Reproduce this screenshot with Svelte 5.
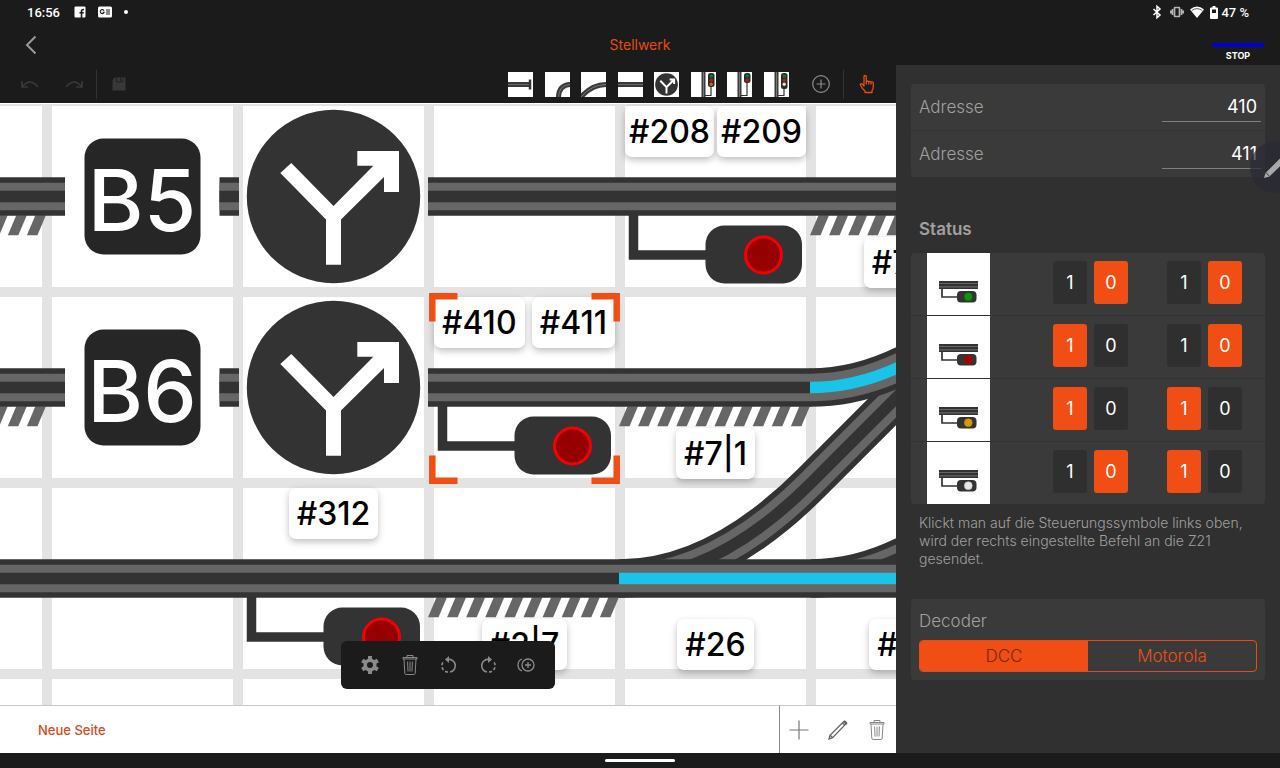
<script lang="ts">
	interface TileLabel {
		col: number;
		row: number;
		text: string;
		side?: 'start' | 'center' | 'end';
		bottom?: boolean;
		tight?: boolean;
	}

	const TILE = 191;
	const OFFSET_X = 47;
	const OFFSET_Y = -2;

	const tileX = (col: number) => OFFSET_X + col * TILE;
	const tileY = (row: number) => OFFSET_Y + row * TILE;

	const gridLines = [-1, 0, 1, 2, 3, 4, 5, 6, 7, 8, 9, 10];
	const stripes = [0, 1, 2, 3, 4, 5, 6, 7, 8, 9];

	const platforms = [
		{ col: -1, row: 0 },
		{ col: -1, row: 1 },
		{ col: 4, row: 0 },
		{ col: 3, row: 1 },
		{ col: 2, row: 2 }
	];
	const signals = [
		{ col: 3, row: 0 },
		{ col: 2, row: 1 },
		{ col: 1, row: 2 }
	];
	const blocks = [
		{ row: 0, name: 'B5' },
		{ row: 1, name: 'B6' }
	];

	const labels: TileLabel[] = [
		{ col: 3, row: 0, text: '#208', side: 'start', tight: true },
		{ col: 3, row: 0, text: '#209', side: 'end', tight: true },
		{ col: 4, row: 0, text: '#7|2', bottom: true },
		{ col: 2, row: 1, text: '#410', side: 'start' },
		{ col: 2, row: 1, text: '#411', side: 'end' },
		{ col: 3, row: 1, text: '#7|1', bottom: true },
		{ col: 1, row: 2, text: '#312' },
		{ col: 2, row: 2, text: '#2|7', bottom: true },
		{ col: 3, row: 2, text: '#26', bottom: true },
		{ col: 4, row: 2, text: '#27', bottom: true }
	];

	const tools = ['end', 'curve', 'bend', 'straight', 'route', 'signal3', 'signal2', 'signal4'];

	let addresses = $state([410, 411]);
	let states = $state([
		{ name: 'Grün', light: '#0a970a', ring: '#0b7a10', bits: [0, 0] },
		{ name: 'Rot', light: '#a00000', ring: '#c00000', bits: [1, 0] },
		{ name: 'Gelb', light: '#e09600', ring: '#c98a10', bits: [1, 1] },
		{ name: 'Weiß', light: '#e8e8e8', ring: '#cccccc', bits: [0, 1] }
	]);
	let decoder = $state('DCC');
</script>

{#snippet track(d: string, occupied = false)}
	<path class="rail-outer" {d} />
	<path class="rail-bed" {d} />
	<path class={occupied ? 'rail-core occupied' : 'rail-core'} {d} />
{/snippet}

{#snippet routeSign()}
	<g>
		<circle cx="95.5" cy="95.5" r="86.7" fill="#333" />
		<path
			fill="#fff"
			d="M95.5 105L135.3 64.7H119.3V50H161V91H146V76L103 118.5V163.7H88V118.5L42.3 72L53.3 62Z"
		/>
	</g>
{/snippet}

{#snippet trash()}
	<svg width="20" height="22" viewBox="0 0 20 22" fill="none" stroke="currentColor" stroke-width="1">
		<path d="M4 5l.8 14c0 1 .5 1.500 1.400 1.500h7.600c.9 0 1.400-.5 1.400-1.500L16 5" />
		<path d="M3 5V3.500h14V5zM7 3.500V1.500h6v2M7.600 7.500l.4 10M10 7.500v10M12.400 7.500l-.4 10" />
	</svg>
{/snippet}

<div class="app">
	<div class="status-bar">
		<div class="status-group left">
			<span>16:56</span>
			<svg width="12" height="12" viewBox="0 0 12 12">
				<rect x="0.5" y="0.5" width="11" height="11" rx="1" fill="#fff" />
				<path d="M7.500 12V5.300q0-2 2.500-1.700M5.500 6.800h4.300" fill="none" stroke="#1b1b1b" stroke-width="1.6" />
			</svg>
			<svg width="14" height="12" viewBox="0 0 14 12">
				<rect y="0.5" width="14" height="11" rx="1.5" fill="#fff" />
				<path
					d="M6 4.600A2 2 0 1 0 6.200 6.200H4.600M8 4h4M8 6h4M8 8h4"
					fill="none"
					stroke="#1b1b1b"
					stroke-width="1.1"
				/>
			</svg>
			<span class="dot"></span>
		</div>
		<div class="status-group">
			<svg width="10" height="14" viewBox="0 0 10 14" fill="none" stroke="#fff" stroke-width="1.5">
				<path d="M1.500 4l6.500 6-3 2.700V1.300l3 2.700-6.500 6" />
			</svg>
			<svg class="vibrate" width="14" height="12" viewBox="0 0 14 12" fill="none" stroke="#b4b4b4" stroke-width="1.7">
				<rect x="4.5" y="1.5" width="5" height="9" rx="0.5" />
				<path d="M2.500 3v6M11.500 3v6M0.800 4.500v3M13.200 4.500v3" />
			</svg>
			<svg width="14" height="12" viewBox="0 0 14 12" fill="#fff">
				<path d="M0 3.500Q7-2.500 14 3.500L7 12Z" />
				<path d="M1.800 4.500Q7 .8 12.200 4.500" fill="none" stroke="#1b1b1b" stroke-width="0.7" />
			</svg>
			<svg width="8" height="13" viewBox="0 0 8 13">
				<path
					fill="#fff"
					fill-rule="evenodd"
					d="M2.500 0h3v1.500H7q1 0 1 1V12q0 1-1 1H1q-1 0-1-1V2.500q0-1 1-1h1.500zM2 3.500v3.500h4V3.500z"
				/>
			</svg>
			<span class="percent">47 %</span>
		</div>
	</div>

	<header>
		<div class="header-side">
			<button class="back" aria-label="Zurück">
				<svg width="12" height="20" viewBox="0 0 12 20" fill="none" stroke="#999" stroke-width="2">
					<path d="M10.500 1.500L2 10l8.500 8.500" />
				</svg>
			</button>
		</div>
		<h1>Stellwerk</h1>
		<div class="header-side end">
			<button class="stop">STOP</button>
		</div>
	</header>

	<div class="content">
		<main>
			<div class="toolbar">
				<div class="history">
					<button aria-label="Rückgängig">
						<svg width="18" height="12" viewBox="0 0 18 12" fill="none" stroke="currentColor" stroke-width="1.7">
							<path d="M1 3v6h6M1.500 8.500Q9-.5 17 9" />
						</svg>
					</button>
					<button aria-label="Wiederholen">
						<svg width="18" height="12" viewBox="0 0 18 12" fill="none" stroke="currentColor" stroke-width="1.7">
							<path d="M17 3v6h-6M16.500 8.500Q9-.5 1 9" />
						</svg>
					</button>
				</div>
				<span class="divider"></span>
				<button class="save" aria-label="Speichern">
					<svg width="14" height="14" viewBox="0 0 14 14">
						<path d="M3 .5h10.500v13H.5V3z" fill="currentColor" />
						<path d="M4.500 1v4h6V1M8.500 1v3" fill="none" stroke="#1b1b1b" stroke-width="0.8" />
					</svg>
				</button>
				<div class="tools">
					{#each tools as tool}
						<button class="tool" aria-label={tool}>
							<svg width="25" height="25" viewBox="0 0 25 25" fill="none">
								<rect width="25" height="25" fill="#fff" />
								{#if tool === 'end'}
									<path d="M0 12.500H21" stroke="#3a3a3a" stroke-width="5" />
									<path d="M0 12.500H21" stroke="#666" stroke-width="1" />
									<path d="M22 7.500v10" stroke="#333" stroke-width="2.5" />
								{:else if tool === 'curve'}
									<path d="M13.500 25Q14 13 25 12.500" stroke="#3a3a3a" stroke-width="5" />
									<path d="M13.500 25Q14 13 25 12.500" stroke="#777" stroke-width="1" />
								{:else if tool === 'bend'}
									<path d="M0 25Q11 12.500 25 12.500" stroke="#3a3a3a" stroke-width="5" />
									<path d="M0 25Q11 12.500 25 12.500" stroke="#777" stroke-width="1" />
								{:else if tool === 'straight'}
									<path d="M0 12.500H25" stroke="#3a3a3a" stroke-width="5" />
									<path d="M0 12.500H25" stroke="#666" stroke-width="1" />
								{:else if tool === 'route'}
									<g transform="scale(0.131)">{@render routeSign()}</g>
								{:else}
									<path d="M12.500 0V25" stroke="#3a3a3a" stroke-width="4" />
									<path d="M12.500 0V25" stroke="#777" stroke-width="1" />
									<path d="M14 23.500h6V10" stroke="#333" stroke-width="1.2" />
									<rect
										x="17"
										y="1"
										width="6.5"
										height={tool === 'signal2' ? 10 : tool === 'signal3' ? 14 : 16}
										rx="2.5"
										fill="#2b2b2b"
									/>
									<circle cx="20.2" cy="4" r="1.8" fill="#0c7a2c" />
									<circle cx="20.2" cy="8.2" r="1.8" fill="#b01d10" />
									{#if tool !== 'signal2'}
										<circle cx="20.2" cy="12.2" r="1.7" fill={tool === 'signal3' ? '#c46a10' : '#e8e0d0'} />
									{/if}
								{/if}
							</svg>
						</button>
					{/each}
				</div>
				<button class="add" aria-label="Hinzufügen">
					<svg width="18" height="18" viewBox="0 0 18 18" fill="none" stroke="#8c8c8c" stroke-width="1.2">
						<circle cx="9" cy="9" r="8.3" />
						<path d="M9 4.500v9M4.500 9h9" />
					</svg>
				</button>
				<span class="divider"></span>
				<button class="hand" aria-label="Bearbeiten">
					<svg width="16" height="20" viewBox="0 0 16 20" fill="none" stroke="#e84e18" stroke-width="1.3" stroke-linejoin="round">
						<path
							d="M5 12V2.700q0-1.200 1.100-1.200T7.300 2.700V8q.2-1 1.200-1t1.200 1.200q.2-.9 1.200-.9t1.100 1.200q.3-.7 1.200-.6 1.100.1 1.100 1.300V13q0 2-1.300 3.500V18.500H6V17Q3.500 15 1.500 11.200q-.5-1 .3-1.400.8-.4 1.600.5zM7.300 8v2.500M9.700 8v2.500M12 8.500v2"
						/>
					</svg>
				</button>
			</div>

			<div class="canvas">
				<svg class="plan">
					{#each gridLines as n}
						<line class="grid-line" x1={tileX(n)} x2={tileX(n)} y1="0" y2="100%" />
						<line class="grid-line" y1={tileY(n)} y2={tileY(n)} x1="0" x2="100%" />
					{/each}

					{#each platforms as { col, row }}
						<g transform="translate({tileX(col)} {tileY(row)})">
							{#each stripes as n}
								<path fill="#666" d="M{n * 19.1 - 1} 134.300h10.500l8.500-20h-10.500z" />
							{/each}
						</g>
					{/each}

					{@render track('M620 475.500Q715.500 475.500 811 380L930 261')}
					{@render track('M811 475.500Q906.500 475.500 1002 380')}
					{@render track('M-10 93.500H65')}
					{@render track('M219.500 93.500H239')}
					{@render track('M428 93.500H2000')}
					{@render track('M-10 284.500H65')}
					{@render track('M219.500 284.500H239')}
					{@render track('M428 284.500H811')}
					{@render track('M810 284.500Q906.500 284.500 1002 189', true)}
					{@render track('M-10 475.500H620')}
					{@render track('M619 475.500H2000', true)}

					{#each signals as { col, row }}
						<g transform="translate({tileX(col)} {tileY(row)})">
							<path d="M13.500 114V154H90" fill="none" stroke="#333" stroke-width="9.5" />
							<rect x="85.5" y="124.5" width="96.5" height="58" rx="19" fill="#333" />
							<circle cx="143.500" cy="154" r="18" fill="#960000" stroke="#f50000" stroke-width="3" />
						</g>
					{/each}

					{#each blocks as { row, name }}
						<g transform="translate({tileX(0)} {tileY(row)})">
							<rect x="37.500" y="37.500" width="116" height="116" rx="19" fill="#262626" />
							<text class="block-name" x="95" y="130">{name}</text>
						</g>
						<g transform="translate({tileX(1)} {tileY(row)})">{@render routeSign()}</g>
					{/each}
				</svg>

				{#each labels as { col, row, text, side = 'center', bottom, tight }}
					<div class="tile {side}" class:bottom style="left: {tileX(col)}px; top: {tileY(row)}px">
						<span class="label" class:tight>{text}</span>
					</div>
				{/each}

				<div class="tile selection" style="left: {tileX(2)}px; top: {tileY(1)}px">
					<svg width="191" height="191" fill="none" stroke="#f04e14" stroke-width="6.5">
						<path
							d="M3.300 28.500V3.300H28.500M162.500 3.300H187.700V28.500M187.700 162.500V187.700H162.500M28.500 187.700H3.300V162.500"
						/>
					</svg>
				</div>

				<div class="popup">
					<button aria-label="Einstellungen">
						<svg width="18" height="18" viewBox="0 0 18 18" fill="none" stroke="currentColor">
							<circle cx="9" cy="9" r="4.8" stroke-width="3.6" />
							<path
								d="M9 0v3.500M9 14.500V18M1.200 4.500l3 1.800M13.800 11.700l3 1.800M1.200 13.500l3-1.800M13.800 6.300l3-1.800"
								stroke-width="4"
							/>
						</svg>
					</button>
					<button aria-label="Löschen">{@render trash()}</button>
					<button aria-label="Nach links drehen">
						<svg width="18" height="18" viewBox="0 0 18 18" fill="none" stroke="currentColor" stroke-width="1.6">
							<path d="M8 3.500A6.300 6.300 0 0 1 10 16" />
							<path d="M8 16A6.300 6.300 0 0 1 4 5" stroke-dasharray="3 2" />
							<path d="M9 0L5 3.500l4 3.500z" fill="currentColor" stroke="none" />
						</svg>
					</button>
					<button aria-label="Nach rechts drehen">
						<svg width="18" height="18" viewBox="0 0 18 18" fill="none" stroke="currentColor" stroke-width="1.6">
							<path d="M10 3.500A6.300 6.300 0 0 0 8 16" />
							<path d="M10 16A6.300 6.300 0 0 0 14 5" stroke-dasharray="3 2" />
							<path d="M9 0l4 3.500L9 7z" fill="currentColor" stroke="none" />
						</svg>
					</button>
					<button aria-label="Duplizieren">
						<svg width="18" height="14" viewBox="0 0 18 14" fill="none" stroke="currentColor" stroke-width="1.3">
							<circle cx="11" cy="7" r="6" />
							<path d="M11 4v6M8 7h6M5 1Q1 2.500 1 7t4 6" />
						</svg>
					</button>
				</div>
			</div>

			<footer>
				<a class="page" href="#neue-seite">Neue Seite</a>
				<div class="page-actions">
					<button aria-label="Seite hinzufügen">
						<svg width="20" height="20" viewBox="0 0 20 20" stroke="#777" stroke-width="1.2">
							<path d="M10 .5v19M.5 10h19" />
						</svg>
					</button>
					<button aria-label="Seite umbenennen">
						<svg width="20" height="20" viewBox="0 0 20 20" fill="none" stroke="#666" stroke-width="1.3">
							<path d="M1 19l1-3.700L15.800 1.500q.8-.7 1.800.3t.5 1.900L4.600 17.700zM14.500 3l2.400 2.500M2.200 15.200l2.500 2.500" />
							<path d="M16 1.300l2.800 2.800" stroke-width="2.2" />
						</svg>
					</button>
					<button class="muted" aria-label="Seite löschen">{@render trash()}</button>
				</div>
			</footer>
		</main>

		<aside>
			<section class="card addresses">
				{#each addresses as _, i}
					<div class="field">
						<label for="address-{i}">Adresse</label>
						<input id="address-{i}" type="text" inputmode="numeric" bind:value={addresses[i]} />
					</div>
				{/each}
			</section>

			<h2>Status</h2>
			<section class="card">
				{#each states as state}
					<div class="state">
						<button class="preview" aria-label={state.name}>
							<svg width="63" height="62" viewBox="0 0 63 62">
								<rect x="12" y="28" width="39" height="8" fill="#333" />
								<path d="M12 30.500h39M12 33.800h39" stroke="#666" stroke-width="1.2" />
								<path d="M15 36v8h17" fill="none" stroke="#333" stroke-width="1.7" />
								<rect x="30" y="38" width="19.5" height="11.5" rx="4" fill="#333" />
								<circle cx="41.3" cy="43.7" r="3.9" fill={state.light} stroke={state.ring} stroke-width="0.7" />
							</svg>
						</button>
						<div class="bits">
							{#each state.bits as bit, i}
								<div class="pair">
									{#each [1, 0] as value}
										<button
											class="bit"
											class:active={bit === value}
											aria-pressed={bit === value}
											onclick={() => (state.bits[i] = value)}
										>
											{value}
										</button>
									{/each}
								</div>
							{/each}
						</div>
					</div>
				{/each}
			</section>
			<p class="hint">
				Klickt man auf die Steuerungssymbole links oben, wird der rechts eingestellte Befehl an die Z21
				gesendet.
			</p>

			<section class="card decoder">
				<h3>Decoder</h3>
				<div class="segments">
					{#each ['DCC', 'Motorola'] as name}
						<button class:active={decoder === name} aria-pressed={decoder === name} onclick={() => (decoder = name)}>
							{name}
						</button>
					{/each}
				</div>
			</section>

			<button class="pen" aria-label="Stift">
				<svg width="26" height="26" viewBox="0 0 26 26">
					<path d="M1 24l1.500-5L18 3.500l4 4L6.500 22.500z" fill="#a9a9ab" />
					<path d="M2.800 18.500l4 4" stroke="#34343b" stroke-width="1" />
				</svg>
			</button>
		</aside>
	</div>

	<div class="nav-bar"><span></span></div>
</div>

<style>
	:global(body) {
		margin: 0;
		background: #1b1b1b;
	}

	.app {
		display: flex;
		flex-direction: column;
		min-height: 100vh;
		background: #1b1b1b;
		color: #fff;
		font-family: Inter, 'Liberation Sans', sans-serif;
	}

	button {
		display: flex;
		align-items: center;
		justify-content: center;
		padding: 0;
		border: 0;
		background: none;
		color: inherit;
		font: inherit;
	}

	svg {
		display: block;
		flex: none;
	}

	h1,
	h2,
	h3,
	p {
		margin: 0;
	}

	.status-bar {
		display: flex;
		justify-content: space-between;
		height: 24px;
		padding: 0 31px 0 27px;
		font: 500 13px Roboto, sans-serif;
	}

	.status-group {
		display: flex;
		align-items: center;
		gap: 6px;
	}

	.left {
		gap: 12px;
	}

	.left span:first-child {
		margin-right: 2px;
	}

	.dot {
		width: 4px;
		height: 4px;
		border-radius: 50%;
		background: #fff;
	}

	.vibrate {
		margin-left: 2px;
	}

	.percent {
		margin-left: -3px;
	}

	header {
		display: flex;
		align-items: center;
		height: 41px;
		padding: 0 16px;
	}

	.header-side {
		display: flex;
		flex: 1;
	}

	.end {
		justify-content: flex-end;
	}

	.back {
		width: 30px;
		height: 30px;
	}

	h1 {
		color: #e04e1c;
		font-size: 14px;
		font-weight: 400;
	}

	.stop {
		width: 52px;
		margin-top: 14px;
		padding-top: 3px;
		border-top: 4px solid #0000d6;
		font-size: 9px;
		font-weight: 700;
		line-height: 11px;
	}

	.content {
		display: flex;
		flex: 1;
	}

	main {
		display: flex;
		flex: 1;
		flex-direction: column;
		min-width: 0;
	}

	.toolbar {
		display: flex;
		align-items: center;
		height: 38px;
		padding: 0 21px;
	}

	.history {
		display: flex;
		gap: 26px;
		margin-right: 13px;
		color: #383838;
	}

	.divider {
		width: 1px;
		height: 29px;
		background: #333;
	}

	.save {
		margin-left: 15px;
		color: #383838;
	}

	.tools {
		display: flex;
		flex: 0 0 281px;
		justify-content: space-between;
		margin-left: auto;
	}

	.add {
		margin: 0 13px 0 23px;
	}

	.hand {
		margin-left: 15px;
	}

	.canvas {
		position: relative;
		flex: 1;
		min-height: 480px;
		box-sizing: border-box;
		border-top: 1px solid #fff;
		overflow: hidden;
		background: #fff;
	}

	.plan {
		position: absolute;
		inset: -1px 0 0;
		width: 100%;
		height: 101%;
	}

	.grid-line {
		stroke: #e3e3e3;
		stroke-width: 10;
	}

	.rail-outer,
	.rail-bed,
	.rail-core {
		fill: none;
		stroke: #333;
		stroke-width: 38.5;
	}

	.rail-bed {
		stroke: #666;
		stroke-width: 27.5;
	}

	.rail-core {
		stroke-width: 11.5;
	}

	.occupied {
		stroke: #19c4e8;
	}

	.block-name {
		fill: #fff;
		font-size: 85px;
		font-weight: 500;
		text-anchor: middle;
	}

	.tile {
		position: absolute;
		display: flex;
		align-items: flex-start;
		justify-content: center;
		box-sizing: border-box;
		width: 191px;
		height: 191px;
		padding: 4px 5px 5px;
		pointer-events: none;
	}

	.start {
		justify-content: flex-start;
	}

	.tile.end {
		justify-content: flex-end;
	}

	.bottom {
		align-items: flex-end;
	}

	.selection {
		padding: 0;
	}

	.label {
		padding: 1px 8px 0;
		border-radius: 7px;
		background: #fff;
		box-shadow: 0 3px 7px rgb(0 0 0 / 25%);
		color: #000;
		font-size: 32px;
		font-weight: 500;
		line-height: 50px;
	}

	.tight {
		padding: 1px 4px 0;
	}

	.popup {
		position: absolute;
		bottom: 16px;
		left: 50%;
		display: flex;
		align-items: center;
		justify-content: space-between;
		box-sizing: border-box;
		width: 214px;
		height: 48px;
		padding: 0 20px;
		border-radius: 6px;
		background: #1b1b1b;
		color: #8a8a8a;
		transform: translateX(-50%);
	}

	footer {
		display: flex;
		align-items: stretch;
		height: 47px;
		border-top: 1px solid #c8c8c8;
		background: #fff;
	}

	.page {
		display: flex;
		flex: 1;
		align-items: center;
		padding-left: 38px;
		color: #d84a1a;
		font-size: 13px;
		font-weight: 500;
		text-decoration: none;
	}

	.page-actions {
		display: flex;
		gap: 19px;
		padding: 0 9px;
		border-left: 1px solid #888;
	}

	.muted {
		color: #888;
	}

	aside {
		position: relative;
		flex: 0 0 30%;
		box-sizing: border-box;
		padding: 19px 15px;
		overflow: hidden;
		background: #303030;
		color: #a0a0a0;
		font-size: 17px;
		font-weight: 300;
	}

	.card {
		border-radius: 4px;
		background: #3a3a3a;
	}

	.field {
		display: flex;
		align-items: center;
		justify-content: space-between;
		height: 46px;
		padding: 0 4px 0 8px;
	}

	.field + .field {
		border-top: 1px solid #343434;
	}

	input {
		box-sizing: border-box;
		width: 99px;
		height: 30px;
		padding: 0 4px;
		border: 0;
		border-bottom: 1px solid #808080;
		outline: 0;
		background: none;
		color: #fff;
		font: inherit;
		font-size: 18px;
		font-weight: 400;
		text-align: right;
	}

	h2 {
		margin: 40px 8px 12px;
		font-size: 17px;
		font-weight: 600;
		line-height: 24px;
	}

	.state {
		display: flex;
		justify-content: space-between;
		height: 62px;
		padding: 0 23px 0 16px;
	}

	.state + .state {
		border-top: 1px solid #333;
	}

	.preview {
		background: #fff;
	}

	.bits {
		display: flex;
		gap: 39px;
		padding: 8px 0 11px;
	}

	.pair {
		display: flex;
		gap: 7px;
	}

	.bit {
		width: 34px;
		border-radius: 3px;
		background: #2f2f2f;
		color: #fff;
		font-size: 18px;
		font-weight: 400;
	}

	.bit.active {
		background: #f04e14;
	}

	.hint {
		padding: 10px 8px 0;
		font-size: 14px;
		line-height: 18px;
	}

	.decoder {
		margin-top: 31px;
		padding: 10px 8px 8px;
	}

	h3 {
		margin-bottom: 7px;
		font-size: 17px;
		font-weight: 300;
		line-height: 24px;
	}

	.segments {
		display: flex;
		border: 1px solid #e04e1c;
		border-radius: 4px;
		overflow: hidden;
	}

	.segments button {
		flex: 1;
		height: 30px;
		color: #f04e14;
	}

	.segments .active {
		background: #f04e14;
		color: #702c14;
	}

	.pen {
		position: absolute;
		top: 76px;
		right: -22px;
		width: 52px;
		height: 52px;
		border-radius: 50%;
		background: rgb(42 42 52 / 70%);
	}

	.nav-bar {
		display: flex;
		align-items: center;
		justify-content: center;
		height: 15px;
	}

	.nav-bar span {
		width: 70px;
		height: 3px;
		border-radius: 2px;
		background: #fff;
	}
</style>
